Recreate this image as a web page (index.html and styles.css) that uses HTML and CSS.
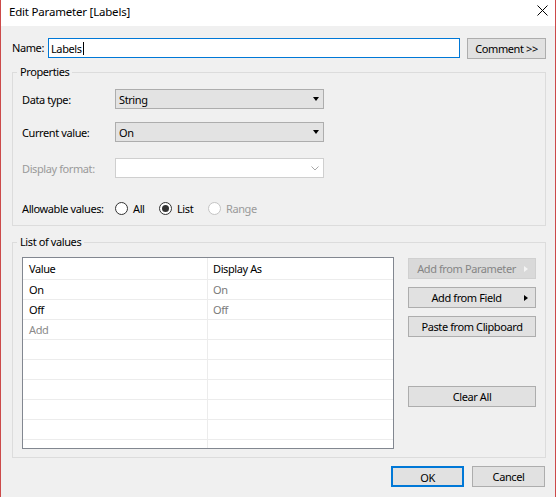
FILE: index.html
```html
<!DOCTYPE html>
<html>
<head>
<meta charset="utf-8">
<title>Edit Parameter [Labels]</title>
<link rel="stylesheet" href="styles.css">
</head>
<body>
<div class="window">
  <div class="titlebar">
    <span class="title">Edit Parameter [Labels]</span>
    <svg class="close" width="11" height="11" viewBox="0 0 11 11"><path d="M0.5 0.5 L10.5 10.5 M10.5 0.5 L0.5 10.5" stroke="#000" stroke-width="1" fill="none"/></svg>
  </div>
  <div class="content">
    <div class="name-row">
      <span class="name-label">Name:</span>
      <div class="textbox">Labels<span class="caret"></span></div>
      <button class="btn comment">Comment &gt;&gt;</button>
    </div>

    <fieldset class="group props">
      <legend>Properties</legend>
      <div class="field-row">
        <span class="lbl">Data type:</span>
        <div class="combo"><span>String</span><span class="tri-down"></span></div>
      </div>
      <div class="field-row row2">
        <span class="lbl">Current value:</span>
        <div class="combo"><span>On</span><span class="tri-down"></span></div>
      </div>
      <div class="field-row row3">
        <span class="lbl disabled">Display format:</span>
        <div class="combo combo-disabled"><span></span>
          <svg class="chevron" width="8" height="5" viewBox="0 0 8 5"><path d="M0.5 0.5 L4 4 L7.5 0.5" stroke="#a8a8a8" stroke-width="1" fill="none"/></svg>
        </div>
      </div>
      <div class="field-row row4">
        <span class="lbl">Allowable values:</span>
        <span class="radio r-all"><span class="circle"></span>All</span>
        <span class="radio r-list"><span class="circle checked"></span>List</span>
        <span class="radio r-range disabled"><span class="circle circle-disabled"></span>Range</span>
      </div>
    </fieldset>

    <fieldset class="group values">
      <legend>List of values</legend>
      <div class="values-body">
        <div class="grid">
          <div class="cell c1 head">Value</div><div class="cell c2 head">Display As</div>
          <div class="cell c1">On</div><div class="cell c2 muted">On</div>
          <div class="cell c1">Off</div><div class="cell c2 muted">Off</div>
          <div class="cell c1 add">Add</div><div class="cell c2"></div>
          <div class="cell c1"></div><div class="cell c2"></div>
          <div class="cell c1"></div><div class="cell c2"></div>
          <div class="cell c1"></div><div class="cell c2"></div>
          <div class="cell c1"></div><div class="cell c2"></div>
          <div class="cell c1"></div><div class="cell c2"></div>
          <div class="cell c1"></div><div class="cell c2"></div>
        </div>
        <div class="side">
          <button class="btn menu btn-disabled"><span class="btn-text">Add from Parameter</span><span class="tri-right light"></span></button>
          <button class="btn menu gap"><span class="btn-text">Add from Field</span><span class="tri-right"></span></button>
          <button class="btn gap">Paste from Clipboard</button>
          <button class="btn clear">Clear All</button>
        </div>
      </div>
    </fieldset>

    <div class="footer">
      <button class="btn ok">OK</button>
      <button class="btn cancel">Cancel</button>
    </div>
  </div>
</div>
</body>
</html>
```

FILE: styles.css
```css
html, body {
  margin: 0;
  padding: 0;
  background: #ffffff;
}
body {
  font-family: "Noto Sans", "Open Sans", sans-serif;
  font-size: 11px;
  letter-spacing: -0.4px;
  color: #000;
}
.window {
  width: 556px;
  height: 497px;
  box-sizing: border-box;
  border-left: 1px solid #cc4a4a;
  border-right: 1px solid #cc4a4a;
  background: #f0f0f0;
  display: flex;
  flex-direction: column;
}
.titlebar {
  height: 26px;
  flex: none;
  background: #ffffff;
  display: flex;
  align-items: flex-start;
  padding: 0 7px 0 8px;
  box-sizing: border-box;
}
.title {
  flex: 1;
  margin-top: 3px;
  line-height: 17px;
  font-size: 11.5px;
  letter-spacing: -0.2px;
}
.close {
  margin-top: 5px;
}
.content {
  padding: 12px 9px 0 11px;
}
.name-row {
  display: flex;
  align-items: flex-start;
  height: 21px;
}
.name-label {
  width: 36px;
  line-height: 20px;
}
.textbox {
  width: 412px;
  height: 20px;
  box-sizing: border-box;
  border: 1px solid #0078d7;
  background: #fff;
  padding-left: 2px;
  display: flex;
  align-items: center;
}
.caret {
  width: 1px;
  height: 13px;
  background: #000;
  margin-left: 1px;
}
.btn {
  font: inherit;
  letter-spacing: inherit;
  color: #000;
  box-sizing: border-box;
  height: 21px;
  border: 1px solid #adadad;
  background: #e1e1e1;
  padding: 0;
  margin: 0;
  line-height: 19px;
}
.comment {
  width: 79px;
  margin-left: 7px;
}
fieldset.group {
  margin: 6px 0 0;
  border: 1px solid #dcdcdc;
  padding: 10px 9px 7px 9px;
  min-width: 0;
}
fieldset.group legend {
  padding: 0 3px;
  margin-left: -5px;
  line-height: 14px;
}
.field-row {
  display: flex;
  align-items: center;
  height: 20px;
}
.row2 { margin-top: 13px; }
.row3 { margin-top: 16px; }
.row4 { margin-top: 20px; }
.lbl {
  width: 93px;
  flex: none;
}
.disabled {
  color: #9a9a9a;
}
.combo {
  width: 209px;
  height: 20px;
  box-sizing: border-box;
  border: 1px solid #adadad;
  background: #e3e3e3;
  padding: 0 4px 0 3px;
  display: flex;
  align-items: center;
  justify-content: space-between;
}
.combo-disabled {
  background: #ffffff;
  border-color: #cfcfcf;
}
.tri-down {
  width: 0;
  height: 0;
  border-left: 3.5px solid transparent;
  border-right: 3.5px solid transparent;
  border-top: 4px solid #000;
}
.radio {
  display: flex;
  align-items: center;
}
.r-all { width: 44px; }
.r-list { width: 49px; }
.circle {
  width: 13px;
  height: 13px;
  box-sizing: border-box;
  border: 1px solid #333;
  border-radius: 50%;
  background: #fff;
  margin-right: 5px;
  display: flex;
  align-items: center;
  justify-content: center;
}
.circle.checked::after {
  content: "";
  width: 7px;
  height: 7px;
  border-radius: 50%;
  background: #333;
}
.circle-disabled {
  border-color: #c4c4c4;
}
fieldset.values {
  margin-top: 9px;
  padding: 8px 9px 8px 9px;
}
.values-body {
  display: flex;
  gap: 14px;
}
.grid {
  width: 372px;
  height: 192px;
  flex: none;
  box-sizing: border-box;
  border: 1px solid #828790;
  background: #fff;
  display: grid;
  grid-template-columns: 185px 1fr;
  grid-template-rows: 22px;
  grid-auto-rows: 20px;
  align-content: start;
  overflow: hidden;
}
.cell {
  box-sizing: border-box;
  border-bottom: 1px solid #ececec;
  line-height: 19px;
  white-space: nowrap;
}
.cell.head {
  line-height: 21px;
}
.c1 {
  border-right: 1px solid #ececec;
  padding-left: 6px;
}
.c2 {
  padding-left: 5px;
}
.muted {
  color: #7a7a7a;
}
.add {
  color: #8a8a8a;
}
.side {
  width: 128px;
  display: flex;
  flex-direction: column;
  padding-top: 1px;
}
.side .btn {
  width: 128px;
}
.gap {
  margin-top: 8px;
}
.clear {
  margin-top: 49px;
}
.menu {
  display: flex;
  align-items: center;
  padding-right: 7px;
}
.btn-text {
  flex: 1;
  text-align: center;
}
.tri-right {
  width: 0;
  height: 0;
  border-top: 3.5px solid transparent;
  border-bottom: 3.5px solid transparent;
  border-left: 4px solid #000;
}
.tri-right.light {
  border-left-color: #f4f4f4;
}
.btn-disabled {
  background: #d9d9d9;
  border-color: #d0d0d0;
  color: #858585;
}
.footer {
  display: flex;
  justify-content: flex-end;
  gap: 8px;
  margin-top: 8px;
  padding-right: 1px;
}
.ok, .cancel {
  width: 73px;
}
.ok {
  border: 2px solid #0078d7;
}
```
